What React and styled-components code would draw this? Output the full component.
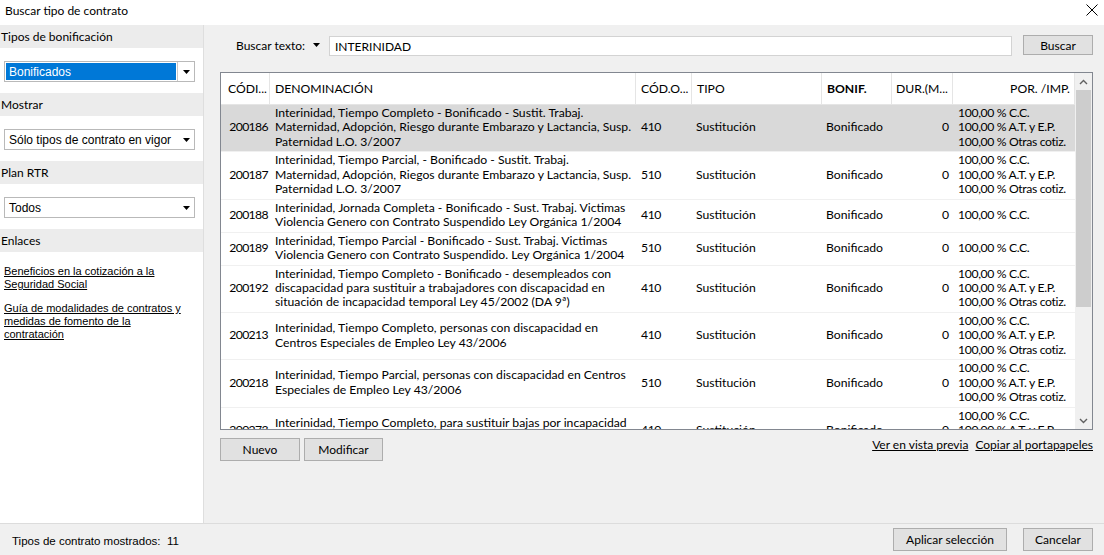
import React from 'react';
import styled, { createGlobalStyle } from 'styled-components';

const GlobalStyle = createGlobalStyle`
  html, body {
    margin: 0;
    padding: 0;
    background: #f0f0f0;
  }
  body {
    font-family: Lato, "Liberation Sans", sans-serif;
    font-size: 12px;
    color: #000;
  }
`;

const rows = [
  {
    code: '200186',
    name: ['Interinidad, Tiempo Completo - Bonificado - Sustit. Trabaj.', 'Maternidad, Adopción, Riesgo durante Embarazo y Lactancia, Susp.', 'Paternidad L.O. 3/2007'],
    cod: '410', full: true, selected: true,
  },
  {
    code: '200187',
    name: ['Interinidad, Tiempo Parcial, - Bonificado - Sustit. Trabaj.', 'Maternidad, Adopción, Riegos durante Embarazo y Lactancia, Susp.', 'Paternidad L.O. 3/2007'],
    cod: '510', full: true,
  },
  {
    code: '200188',
    name: ['Interinidad, Jornada Completa - Bonificado - Sust. Trabaj. Victimas', 'Violencia Genero con Contrato Suspendido Ley Orgánica 1/2004'],
    cod: '410',
  },
  {
    code: '200189',
    name: ['Interinidad, Tiempo Parcial - Bonificado - Sust. Trabaj. Victimas', 'Violencia Genero con Contrato Suspendido. Ley Orgánica 1/2004'],
    cod: '510',
  },
  {
    code: '200192',
    name: ['Interinidad, Tiempo Completo - Bonificado - desempleados con', 'discapacidad para sustituir a trabajadores con discapacidad en', 'situación de incapacidad temporal Ley 45/2002 (DA 9ª)'],
    cod: '410', full: true,
  },
  {
    code: '200213',
    name: ['Interinidad, Tiempo Completo, personas con discapacidad en', 'Centros Especiales de Empleo Ley 43/2006'],
    cod: '410', full: true,
  },
  {
    code: '200218',
    name: ['Interinidad, Tiempo Parcial, personas con discapacidad en Centros', 'Especiales de Empleo Ley 43/2006'],
    cod: '510', full: true,
  },
  {
    code: '200273',
    name: ['Interinidad, Tiempo Completo, para sustituir bajas por incapacidad', 'temporal de trabajadores con discapacidad'],
    cod: '410', full: true,
  },
];

const COLS = '49px 366px 56px 130px 70px 61px 1fr';

const Window = styled.div`
  width: 1104px;
  height: 555px;
  display: flex;
  flex-direction: column;
  overflow: hidden;
`;

const TitleBar = styled.div`
  height: 25px;
  flex: none;
  background: #fff;
  display: flex;
  align-items: center;
  justify-content: space-between;
  padding: 0 5px;
  box-sizing: border-box;
`;

const Title = styled.span`
  font-size: 12px;
  padding-bottom: 5px;
`;

const CloseBtn = styled.span`
  display: flex;
  margin-right: 1px;
  padding-bottom: 5px;
`;

const Main = styled.div`
  flex: 1;
  display: flex;
  min-height: 0;
`;

const Sidebar = styled.aside`
  width: 204px;
  flex: none;
  background: #fff;
  border-right: 1px solid #dedede;
  box-sizing: border-box;
  font-family: "Liberation Sans", Arial, sans-serif;
`;

const SectionHead = styled.div`
  height: 23px;
  background: #ececec;
  display: flex;
  align-items: center;
  font-family: Lato, "Liberation Sans", sans-serif;
  font-size: 12px;
  padding-left: 1px;
`;

const SectionBody = styled.div`
  padding: 13px 8px 11px 4px;
`;

const Combo = styled.div`
  height: 21px;
  box-sizing: border-box;
  border: 1px solid #b9b9b9;
  background: #fff;
  display: flex;
  align-items: stretch;
  font-size: 12px;
`;

const ComboText = styled.div`
  flex: 1;
  display: flex;
  align-items: center;
  padding-left: 3px;
  margin: 1px;
  background: ${p => (p.$selected ? '#0078d7' : 'transparent')};
  color: ${p => (p.$selected ? '#fff' : '#000')};
`;

const ComboArrow = styled.div`
  width: 16px;
  display: flex;
  align-items: center;
  justify-content: center;
  border-left: 1px solid ${p => (p.$split ? '#c8c8c8' : 'transparent')};
`;

const Links = styled.div`
  padding: 13px 6px 0 4px;
  display: flex;
  flex-direction: column;
  gap: 11px;
`;

const SideLink = styled.a`
  color: #000;
  font-size: 11px;
  line-height: 13px;
  text-decoration: underline;
  cursor: pointer;
`;

const Content = styled.section`
  flex: 1;
  display: flex;
  flex-direction: column;
  padding: 10px 11px 0 16px;
  min-width: 0;
  font-size: 12.2px;
`;

const SearchRow = styled.div`
  display: flex;
  align-items: center;
  height: 20px;
  padding-left: 16px;
`;

const SearchLabel = styled.span`
  font-size: 12px;
`;

const LabelArrow = styled.span`
  display: flex;
  margin: 0 9px 0 8px;
`;

const SearchInput = styled.div`
  flex: 1;
  height: 20px;
  box-sizing: border-box;
  border: 1px solid #d3d3d3;
  background: #fff;
  display: flex;
  align-items: center;
  padding-left: 5px;
  margin-right: 11px;
  margin-top: 2px;
  font-size: 12px;
`;

const Button = styled.button`
  height: ${p => p.$h || 23}px;
  width: ${p => p.$w}px;
  box-sizing: border-box;
  border: 1px solid #adadad;
  background: #e1e1e1;
  font-family: Lato, "Liberation Sans", sans-serif;
  font-size: 12px;
  color: #000;
  padding: 0;
  flex: none;
`;

const Grid = styled.div`
  margin-top: 17px;
  height: 358px;
  flex: none;
  border: 1px solid #828790;
  background: #fff;
  display: flex;
  box-sizing: border-box;
`;

const GridMain = styled.div`
  flex: 1;
  overflow: hidden;
  display: flex;
  flex-direction: column;
`;

const HeadRow = styled.div`
  display: grid;
  grid-template-columns: ${COLS};
  height: 32px;
  flex: none;
  box-sizing: border-box;
  border-bottom: 1px solid #e5e5e5;
`;

const HeadCell = styled.div`
  display: flex;
  align-items: center;
  justify-content: ${p => (p.$right ? 'flex-end' : 'flex-start')};
  padding: 0 ${p => (p.$right ? p.$pr ?? 4 : 0)}px 0 ${p => (p.$right ? 0 : 5)}px;
  border-right: 1px solid #e5e5e5;
  font-weight: ${p => (p.$bold ? 700 : 400)};
  white-space: nowrap;
  overflow: hidden;
`;

const BodyRow = styled.div`
  display: grid;
  grid-template-columns: ${COLS};
  flex: none;
  background: ${p => (p.$selected ? '#d9d9d9' : '#fff')};
  border-bottom: 1px solid #f0f0f0;
  padding: 1px 0 2px;
  line-height: 14.45px;
`;

const Cell = styled.div`
  display: flex;
  flex-direction: column;
  justify-content: center;
  align-items: ${p => (p.$right ? 'flex-end' : 'flex-start')};
  padding: 0 ${p => (p.$right ? p.$pr ?? 4 : 0)}px 0 ${p => p.$pl ?? 5}px;
  letter-spacing: ${p => p.$tight || 0}px;
  white-space: nowrap;
  overflow: hidden;
`;

const ScrollBar = styled.div`
  width: 17px;
  flex: none;
  background: #f0f0f0;
  display: flex;
  flex-direction: column;
  align-items: center;
`;

const ScrollArrow = styled.div`
  height: 17px;
  display: flex;
  align-items: center;
  justify-content: center;
`;

const Thumb = styled.div`
  width: 15px;
  height: 217px;
  background: #cdcdcd;
`;

const ScrollTrack = styled.div`
  flex: 1;
  width: 100%;
  display: flex;
  justify-content: center;
`;

const GridFooter = styled.div`
  display: flex;
  align-items: center;
  margin-top: 7px;
  gap: 4px;
`;

const FooterLinks = styled.div`
  margin-left: auto;
  display: flex;
  gap: 7px;
  padding-bottom: 10px;
`;

const TextLink = styled.a`
  color: #000;
  text-decoration: underline;
  font-size: 12px;
`;

const StatusBar = styled.footer`
  height: 32px;
  flex: none;
  border-top: 1px solid #dcdcdc;
  box-sizing: border-box;
  display: flex;
  align-items: center;
  padding: 0 11px 0 12px;
  gap: 16px;
`;

const StatusText = styled.span`
  font-family: "Liberation Sans", Arial, sans-serif;
  font-size: 11.5px;
  margin-right: auto;
  white-space: pre;
  padding-top: 3px;
`;

const Caret = ({ color = '#000' }) => (
  <svg width="7" height="4" viewBox="0 0 7 4">
    <path d="M0 0h7L3.5 4z" fill={color} />
  </svg>
);

const Chevron = ({ up }) => (
  <svg width="9" height="6" viewBox="0 0 9 6">
    <path d={up ? 'M1 5l3.5-3.5L8 5' : 'M1 1l3.5 3.5L8 1'} stroke="#606060" strokeWidth="1.4" fill="none" />
  </svg>
);

const CloseIcon = () => (
  <svg width="12" height="12" viewBox="0 0 12 12">
    <path d="M0.5 0.5l11 11M11.5 0.5l-11 11" stroke="#000" strokeWidth="1" />
  </svg>
);

const Section = ({ title, value, selected, split }) => (
  <>
    <SectionHead>{title}</SectionHead>
    <SectionBody>
      <Combo>
        <ComboText $selected={selected}>{value}</ComboText>
        <ComboArrow $split={split}><Caret /></ComboArrow>
      </Combo>
    </SectionBody>
  </>
);

const PorImp = ({ full }) =>
  full ? (
    <>
      <span>100,00 % C.C.</span>
      <span>100,00 % A.T. y E.P.</span>
      <span>100,00 % Otras cotiz.</span>
    </>
  ) : (
    <span>100,00 % C.C.</span>
  );

export default function App() {
  return (
    <>
      <GlobalStyle />
      <Window>
        <TitleBar>
          <Title>Buscar tipo de contrato</Title>
          <CloseBtn><CloseIcon /></CloseBtn>
        </TitleBar>
        <Main>
          <Sidebar>
            <Section title="Tipos de bonificación" value="Bonificados" selected split />
            <Section title="Mostrar" value="Sólo tipos de contrato en vigor" />
            <Section title="Plan RTR" value="Todos" />
            <SectionHead>Enlaces</SectionHead>
            <Links>
              <SideLink>Beneficios en la cotización a la<br />Seguridad Social</SideLink>
              <SideLink>Guía de modalidades de contratos y<br />medidas de fomento de la<br />contratación</SideLink>
            </Links>
          </Sidebar>
          <Content>
            <SearchRow>
              <SearchLabel>Buscar texto:</SearchLabel>
              <LabelArrow><Caret /></LabelArrow>
              <SearchInput>INTERINIDAD</SearchInput>
              <Button $w={70} $h={20}>Buscar</Button>
            </SearchRow>
            <Grid>
              <GridMain>
                <HeadRow>
                  <HeadCell $right $pr={2}>CÓDI...</HeadCell>
                  <HeadCell>DENOMINACIÓN</HeadCell>
                  <HeadCell>CÓD.O...</HeadCell>
                  <HeadCell>TIPO</HeadCell>
                  <HeadCell $bold>BONIF.</HeadCell>
                  <HeadCell $right>DUR.(M...</HeadCell>
                  <HeadCell $right>POR. /IMP.</HeadCell>
                </HeadRow>
                {rows.map(r => (
                  <BodyRow key={r.code} $selected={r.selected}>
                    <Cell $right $pr={2} $tight={-0.6}>{r.code}</Cell>
                    <Cell>{r.name.map((l, i) => <span key={i}>{l}</span>)}</Cell>
                    <Cell $tight={-0.4}>{r.cod}</Cell>
                    <Cell $pl={4}>Sustitución</Cell>
                    <Cell $pl={4}>Bonificado</Cell>
                    <Cell $right>0</Cell>
                    <Cell $pl={5} $tight={-0.35}><PorImp full={r.full} /></Cell>
                  </BodyRow>
                ))}
              </GridMain>
              <ScrollBar>
                <ScrollArrow><Chevron up /></ScrollArrow>
                <ScrollTrack><Thumb /></ScrollTrack>
                <ScrollArrow><Chevron /></ScrollArrow>
              </ScrollBar>
            </Grid>
            <GridFooter>
              <Button $w={80}>Nuevo</Button>
              <Button $w={79}>Modificar</Button>
              <FooterLinks>
                <TextLink>Ver en vista previa</TextLink>
                <TextLink>Copiar al portapapeles</TextLink>
              </FooterLinks>
            </GridFooter>
          </Content>
        </Main>
        <StatusBar>
          <StatusText>Tipos de contrato mostrados:  11</StatusText>
          <Button $w={114}>Aplicar selección</Button>
          <Button $w={70}>Cancelar</Button>
        </StatusBar>
      </Window>
    </>
  );
}
